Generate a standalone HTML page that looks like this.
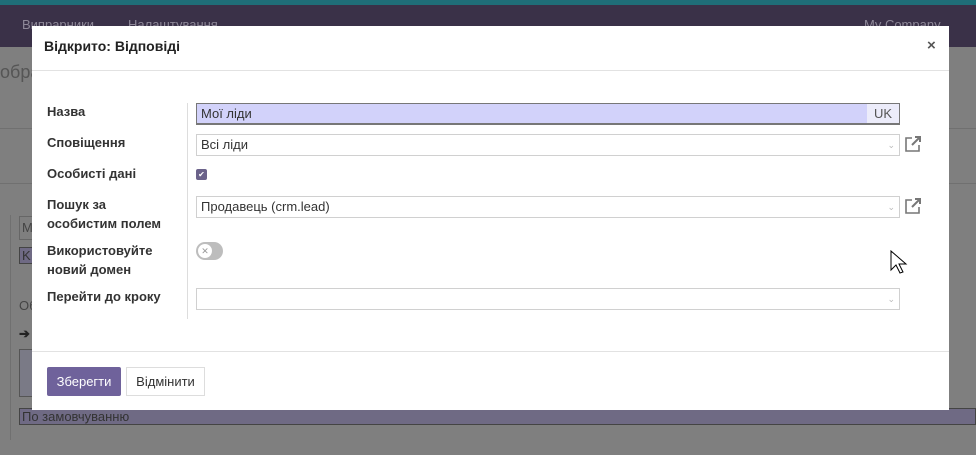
<!DOCTYPE html>
<html><head><meta charset="utf-8"><style>
body{margin:0;width:976px;height:455px;overflow:hidden;position:relative;background:#7f7f7f;font-family:"Liberation Sans","Noto Sans CJK SC",sans-serif;font-size:13px;color:#222}
.abs{position:absolute}
.teal{left:0;top:0;width:976px;height:5px;background:#1f6e78}
.nav{left:0;top:5px;width:976px;height:42px;background:#3a3148;color:#8e8898;font-size:13px}
.modal{left:32px;top:26px;width:917px;height:384px;background:#fff}
.lbl{font-weight:bold;color:#333;font-size:13px;left:15px;line-height:19px}
.inp{left:164px;width:704px;height:22px;border:1px solid #d0d0d0;box-sizing:border-box;font-size:13px;line-height:20px;padding-left:4px;color:#333}
.caret{position:absolute;right:4px;top:0;color:#bbb;font-size:9px}
.ext{left:870px;width:18px;height:18px}
</style></head><body>
<div class="abs teal"></div>
<div class="abs nav"><span class="abs" style="left:22px;top:12px">Випрарники</span><span class="abs" style="left:128px;top:12px">Налаштування</span><span class="abs" style="left:864px;top:12px">My Company</span></div>
<div class="abs" style="left:0;top:62px;color:#555;font-size:18px">обра</div>
<div class="abs" style="left:0;top:128px;width:976px;height:1px;background:#707070"></div>
<div class="abs" style="left:0;top:183px;width:976px;height:1px;background:#707070"></div>
<div class="abs" style="left:10px;top:215px;width:1px;height:225px;background:#707070"></div>
<div class="abs" style="left:19px;top:216px;width:20px;height:24px;border:1px solid #666;box-sizing:border-box;color:#444;padding-left:2px;line-height:22px">M</div>
<div class="abs" style="left:19px;top:247px;width:20px;height:17px;background:#6f6a84;border:1px solid #444;box-sizing:border-box;color:#333;padding-left:2px;line-height:15px">K</div>
<div class="abs" style="left:19px;top:298px;color:#444">Об</div>
<div class="abs" style="left:19px;top:326px;color:#222;font-weight:bold">➔</div>
<div class="abs" style="left:19px;top:408px;width:957px;height:17px;background:#6f6a84;border:1px solid #444;box-sizing:border-box;color:#333;font-size:13px;line-height:15px;padding-left:2px">По замовчуванню</div>
<div class="abs" style="left:19px;top:349px;width:20px;height:48px;background:#7a7a86;border:1px solid #555;box-sizing:border-box"></div>
<div class="abs modal">
 <div class="abs" style="left:12px;top:12px;font-weight:bold;font-size:14px;color:#222">Відкрито: Відповіді</div>
 <div class="abs" style="left:895px;top:11px;font-size:15px;color:#555;font-weight:bold">×</div>
 <div class="abs" style="left:0;top:44px;width:917px;height:1px;background:#e2e2e2"></div>
 <div class="abs" style="left:155px;top:77px;width:1px;height:216px;background:#ddd"></div>
 <div class="abs lbl" style="top:76px">Назва</div>
 <div class="abs lbl" style="top:107px">Сповіщення</div>
 <div class="abs lbl" style="top:138px">Особисті дані</div>
 <div class="abs lbl" style="top:169px">Пошук за<br>особистим полем</div>
 <div class="abs lbl" style="top:215px">Використовуйте<br>новий домен</div>
 <div class="abs lbl" style="top:261px">Перейти до кроку</div>
 <div class="abs inp" style="top:77px;background:#d2d2fa;border-color:#777;border-width:1px 1px 2px 1px">Мої ліди<span class="abs" style="right:0;top:0;width:32px;height:19px;background:#ececfa;color:#555;text-align:center">UK</span></div>
 <div class="abs inp" style="top:108px">Всі ліди<span class="caret">⌄</span></div>
 <svg class="abs ext" style="top:109px;left:872px" viewBox="0 0 18 18"><path d="M8 3H2v13h13v-6" fill="none" stroke="#777" stroke-width="1.6"/><path d="M8 10l8-8M11 2h5v5" fill="none" stroke="#777" stroke-width="2"/></svg>
 <div class="abs" style="left:164px;top:143px;width:11px;height:11px;border-radius:2px;background:#6b628a;color:#fff;font-size:8px;line-height:11px;text-align:center">✔</div>
 <div class="abs inp" style="top:170px">Продавець (crm.lead)<span class="caret">⌄</span></div>
 <svg class="abs ext" style="top:171px;left:872px" viewBox="0 0 18 18"><path d="M8 3H2v13h13v-6" fill="none" stroke="#777" stroke-width="1.6"/><path d="M8 10l8-8M11 2h5v5" fill="none" stroke="#777" stroke-width="2"/></svg>
 <div class="abs" style="left:164px;top:216px;width:27px;height:18px;border-radius:9px;background:#bdbdbd"><div class="abs" style="left:2px;top:2px;width:14px;height:14px;border-radius:7px;background:#fff;color:#999;font-size:9px;line-height:14px;text-align:center">✕</div></div>
 <div class="abs inp" style="top:262px"><span class="caret">⌄</span></div>
 <div class="abs" style="left:0;top:325px;width:917px;height:1px;background:#e2e2e2"></div>
 <div class="abs" style="left:15px;top:341px;width:74px;height:29px;background:#6f629b;border-radius:2px;color:#fff;font-size:13px;line-height:29px;text-align:center">Зберегти</div>
 <div class="abs" style="left:94px;top:341px;width:79px;height:29px;border:1px solid #ddd;box-sizing:border-box;color:#333;font-size:13px;line-height:27px;text-align:center">Відмінити</div>
</div>
<svg class="abs" style="left:890px;top:250px" width="18" height="26" viewBox="0 0 18 26"><path d="M1 1v19l5-5 4 8 3-1-4-8h7z" fill="#fff" stroke="#000" stroke-width="1"/></svg>
</body></html>
